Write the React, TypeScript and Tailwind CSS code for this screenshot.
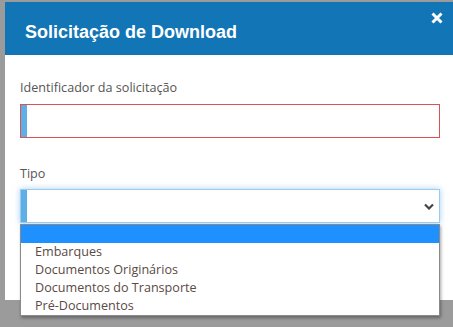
const options = ['Embarques', 'Documentos Originários', 'Documentos do Transporte', 'Pré-Documentos']

const App = () => {
  return (
    <div className="w-[453px] h-[327px] bg-[#9b9b9b] pl-[5px] pt-[2px] overflow-hidden">
      <div className="bg-white h-[298px] flex flex-col">
        <div className="h-[53px] bg-[#1275b5] flex justify-between pl-[20px] pr-[10px]">
          <h1 className="mt-[19px] text-white font-bold text-[18px] leading-[22px] font-['Liberation_Sans',Arial,sans-serif]">
            Solicitação de Download
          </h1>
          <svg className="mt-[10px]" width="12" height="12" viewBox="0 0 12 12">
            <path d="M1.5 1.5 L10.5 10.5 M10.5 1.5 L1.5 10.5" stroke="#fff" strokeWidth="3" />
          </svg>
        </div>

        <div className="pl-[15px] pr-[13px] pt-[24px] font-['Open_Sans',sans-serif] text-[12.6px] text-[#555]">
          <label className="block leading-[18px] mb-[7px]">Identificador da solicitação</label>
          <div className="h-[34px] border border-[#d9534f] flex">
            <div className="w-[6px] bg-[#5dafe6]" />
          </div>

          <label className="block leading-[18px] mt-[27px] mb-[6px]">Tipo</label>
          <div className="relative">
            <div className="h-[34px] border border-[#9ecaed] shadow-[0_0_6px_rgba(102,175,233,0.6)] flex items-center">
              <div className="w-[6px] h-full bg-[#5dafe6]" />
              <svg className="ml-auto mr-[5px]" width="10" height="7" viewBox="0 0 10 7">
                <path d="M1 1.5 L5 5.5 L9 1.5" fill="none" stroke="#444" strokeWidth="2.2" />
              </svg>
            </div>

            <ul className="absolute left-0 right-0 top-[35px] bg-white border border-[#8a8a8a] shadow-[1px_2px_3px_rgba(0,0,0,0.35)] text-[12.6px] text-[#5a4a45]">
              <li className="h-[18px] bg-[#1e90ff]" />
              {options.map((opt) => (
                <li key={opt} className="h-[18px] leading-[18px] pl-[14px]">
                  {opt}
                </li>
              ))}
            </ul>
          </div>
        </div>
      </div>
    </div>
  )
}

export default App
